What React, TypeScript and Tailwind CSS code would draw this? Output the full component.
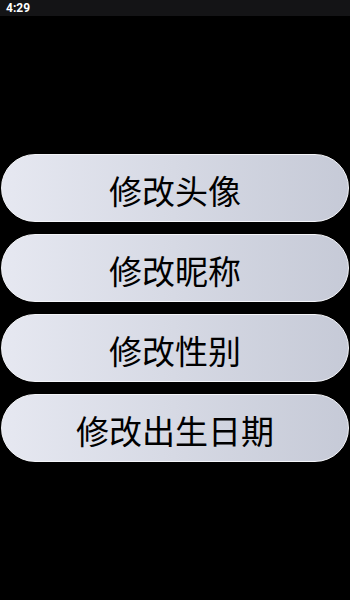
const ITEMS = ["修改头像", "修改昵称", "修改性别", "修改出生日期"];

export default function App() {
  return (
    <main className="h-[600px] w-[350px] bg-black flex flex-col overflow-hidden">
      <div className="h-4 bg-[#141416] flex items-center pl-[6px]">
        <span className="text-[12px] font-bold text-white leading-none font-['Roboto',sans-serif]">4:29</span>
      </div>

      <div className="flex flex-col gap-3 pt-[138px] px-[1px]">
        {ITEMS.map(label => (
          <button
            key={label}
            className="h-[68px] w-full rounded-full border border-[#f4f5f9] bg-gradient-to-r from-[#e6e8f1] to-[#c6cad7] flex items-center justify-center pt-[5px] text-[33px] text-black leading-none font-['Noto_Sans_CJK_SC',sans-serif]"
          >
            {label}
          </button>
        ))}
      </div>
    </main>
  );
}
